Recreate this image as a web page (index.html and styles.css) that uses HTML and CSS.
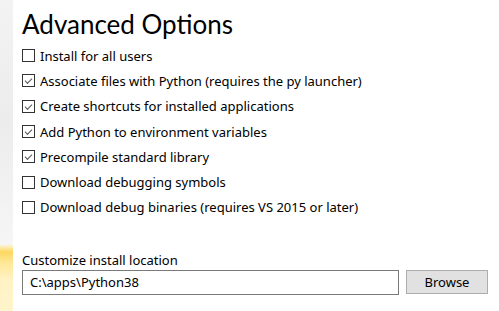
FILE: index.html
```html
<!DOCTYPE html>
<html lang="en">
<head>
  <meta charset="UTF-8">
  <title>Advanced Options</title>
  <link rel="stylesheet" href="styles.css">
</head>
<body>
  <div class="side"></div>

  <div class="page">
    <h1>Advanced Options</h1>

    <div class="options">
      <label class="option"><span class="box"></span>Install for all users</label>
      <label class="option"><span class="box checked"></span>Associate files with Python (requires the py launcher)</label>
      <label class="option"><span class="box checked"></span>Create shortcuts for installed applications</label>
      <label class="option"><span class="box checked"></span>Add Python to environment variables</label>
      <label class="option"><span class="box checked"></span>Precompile standard library</label>
      <label class="option"><span class="box"></span>Download debugging symbols</label>
      <label class="option"><span class="box"></span>Download debug binaries (requires VS 2015 or later)</label>
    </div>

    <div class="location">
      <div class="location-label">Customize install location</div>
      <div class="location-row">
        <div class="path">C:\apps\Python38</div>
        <button class="browse">Browse</button>
      </div>
    </div>
  </div>
</body>
</html>
```

FILE: styles.css
```css
body {
  margin: 0;
  height: 311px;
  display: flex;
  background: #fff;
  font-family: "Noto Sans", "Open Sans", sans-serif;
  color: #000;
  overflow: hidden;
}

/* left decoration strip */
.side {
  width: 13px;
  flex: none;
  background: linear-gradient(to bottom,
    #f3f3f3 0px, #ececec 120px, #f2f2f2 200px, #f6f6f6 244px,
    #fde9a0 248px, #fdd860 252px, #fee794 262px, #fff2c4 280px, #fff4cc 311px);
}

.page {
  flex: 1;
  padding: 6px 0 0 9px;
}

h1 {
  margin: 0;
  font-family: Lato, "Noto Sans", sans-serif;
  font-size: 26px;
  font-weight: normal;
  line-height: 36px;
}

.options {
  margin-top: 1px;
  display: flex;
  flex-direction: column;
}

.option {
  display: flex;
  align-items: center;
  height: 25.3px;
  font-size: 13px;
}

.box {
  width: 11px;
  height: 11px;
  border: 1px solid #333;
  margin-right: 5px;
  position: relative;
}

.box.checked::after {
  content: "";
  position: absolute;
  left: 1px;
  top: 1px;
  width: 6px;
  height: 3px;
  border-left: 1px solid #555;
  border-bottom: 1px solid #555;
  transform: translate(1px, 2px) rotate(-45deg);
}

.location {
  margin-top: 31px;
}

.location-label {
  font-size: 13px;
  line-height: 18px;
}

.location-row {
  display: flex;
  margin-top: 1px;
  gap: 7px;
}

.path {
  box-sizing: border-box;
  width: 377px;
  height: 25px;
  border: 1px solid #7a7a7a;
  padding-left: 7px;
  font-size: 13px;
  line-height: 23px;
}

.browse {
  width: 82px;
  height: 24px;
  border: 1px solid #adadad;
  background: #e1e1e1;
  font-family: inherit;
  font-size: 13px;
  padding: 0;
  color: #000;
}
```
